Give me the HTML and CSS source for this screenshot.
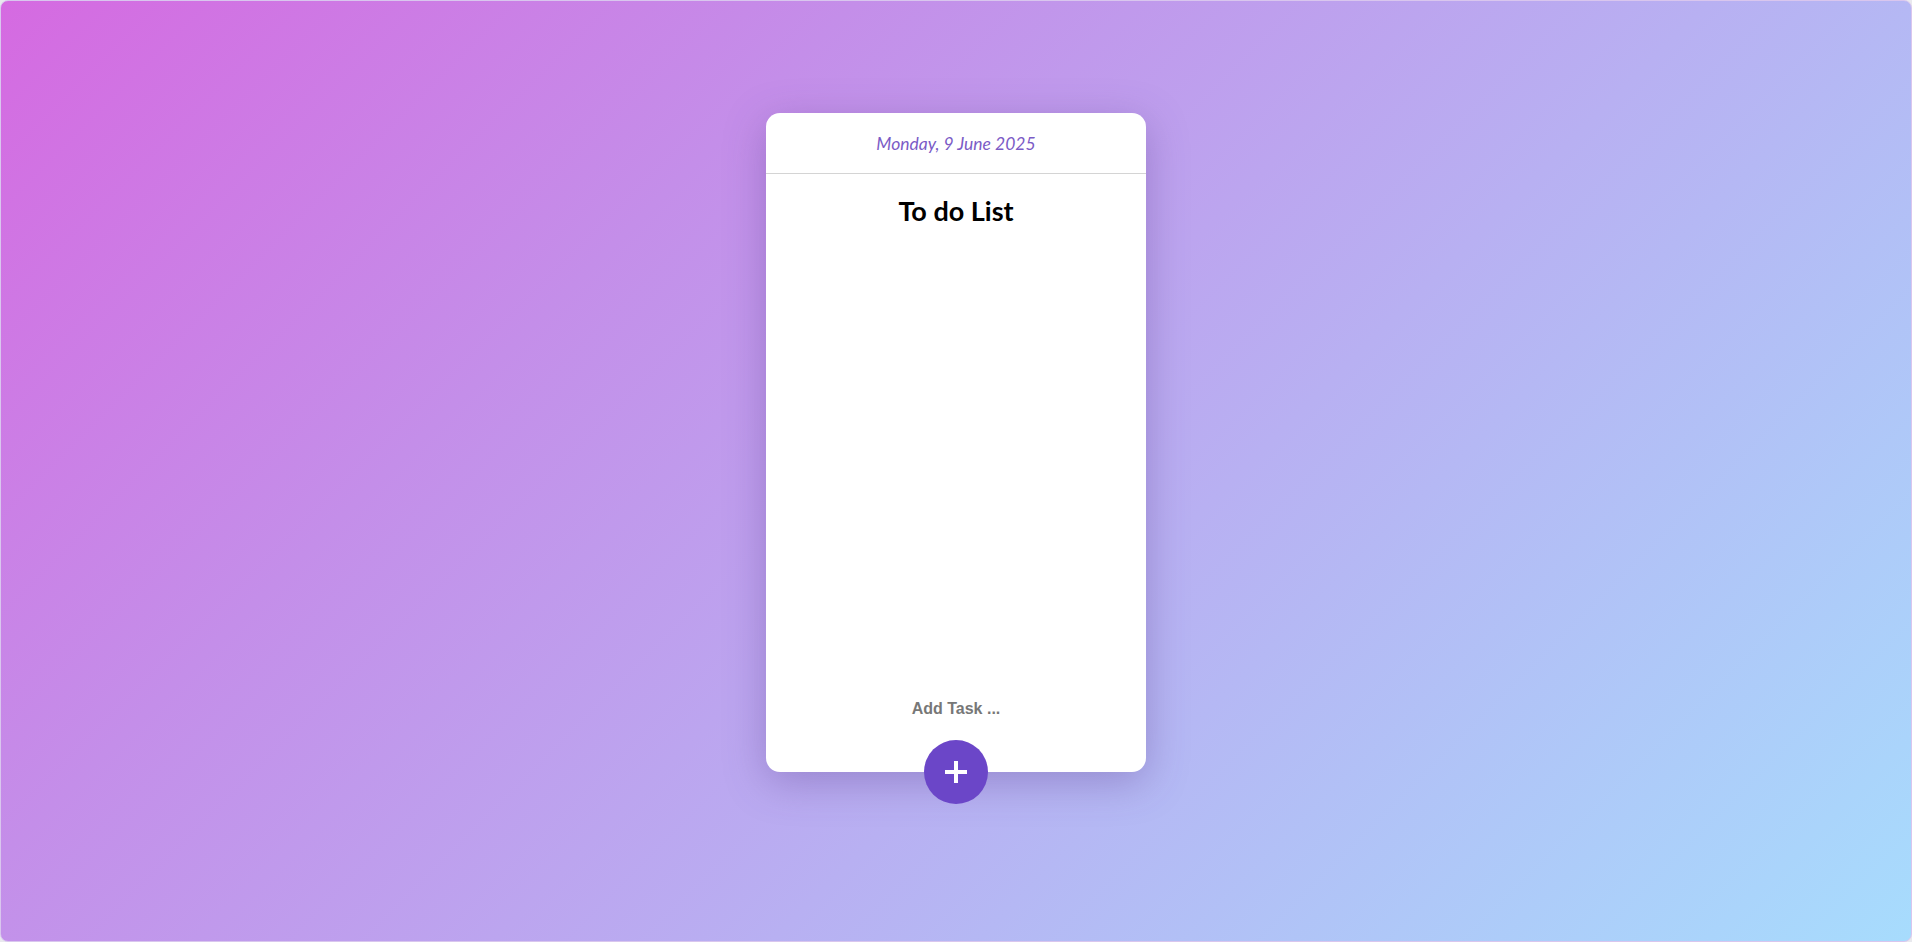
FILE: index.html
```html
<!DOCTYPE html>
<html>
<head>
<meta charset="utf-8">
<title>To do List</title>
<link rel="stylesheet" href="styles.css">
</head>
<body>
<div class="frame">
  <div class="card">
    <div class="date">Monday, 9 June 2025</div>
    <h1 class="title">To do List</h1>
    <ul class="list"></ul>
    <input class="task-input" type="text" placeholder="Add Task ..." autofocus>
    <button class="add-btn" aria-label="Add task">
      <svg width="24" height="24" viewBox="0 0 24 24"><path d="M12 1v22M1 12h22" stroke="#fff" stroke-width="4" fill="none"/></svg>
    </button>
  </div>
</div>
</body>
</html>
```

FILE: styles.css
```css
* { box-sizing: border-box; }
html, body { margin: 0; padding: 0; height: 100%; }
body { background: #e9e9ee; font-family: "Open Sans", sans-serif; }
.frame {
  height: 942px;
  border-radius: 8px;
  border: 1px solid #d9c6ee;
  background: linear-gradient(135deg, #d56ae1 0%, #c48ee9 30%, #b8b0f2 60%, #a7dcfd 100%);
  display: flex;
  justify-content: center;
  padding-top: 112px;
}
.card {
  position: relative;
  width: 380px;
  height: 659px;
  background: #fff;
  border-radius: 14px;
  box-shadow: 0 10px 40px rgba(90, 60, 140, 0.35);
  display: flex;
  flex-direction: column;
  align-items: center;
}
.date {
  width: 100%;
  height: 61px;
  border-bottom: 1px solid #d4d4d4;
  display: flex;
  align-items: center;
  justify-content: center;
  font-family: "Lato", sans-serif;
  font-style: italic;
  font-size: 17.5px;
  color: #7b5bc6;
  padding-top: 1px;
}
.title {
  margin: 19px 0 0;
  font-family: "Lato", sans-serif;
  font-weight: 700;
  font-size: 27px;
  line-height: 36px;
  color: #000;
}
.list { flex: 1; margin: 0; padding: 0; list-style: none; }
.task-input {
  border: none;
  outline: none;
  text-align: center;
  font-family: "Liberation Sans", Arial, sans-serif;
  font-weight: 700;
  font-size: 16px;
  width: 200px;
  height: 24px;
  margin-bottom: 51px;
  color: #333;
  caret-color: #222;
}
.task-input::placeholder { color: #777; }
.add-btn {
  position: absolute;
  left: 50%;
  bottom: -32px;
  transform: translateX(-50%);
  width: 64px;
  height: 64px;
  border-radius: 50%;
  border: none;
  background: #6b46c8;
  display: flex;
  align-items: center;
  justify-content: center;
  padding: 0;
  cursor: pointer;
}
```
